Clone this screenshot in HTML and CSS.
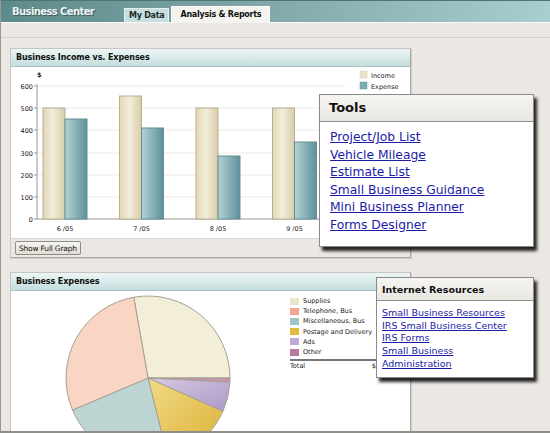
FILE: index.html
```html
<!DOCTYPE html>
<html lang="en">
<head>
  <meta charset="UTF-8">
  <title>Business Center</title>
  <link rel="stylesheet" href="styles.css">
</head>
<body>
  <div class="page">
    <div class="topbar">
      <div class="app-title">Business Center</div>
      <div class="tabs">
        <div class="tab">My Data</div>
        <div class="tab active">Analysis &amp; Reports</div>
      </div>
    </div>
    <div class="subbar"></div>

    <div class="main">
      <div class="panel income-panel">
        <div class="panel-title">Business Income vs. Expenses</div>
        <div class="chart">
          <svg width="398" height="171" viewBox="0 0 398 171">
            <defs>
              <linearGradient id="inc" x1="0" x2="1" y1="0" y2="0">
                <stop offset="0" stop-color="#e2d7b6"/>
                <stop offset="0.45" stop-color="#f3eedb"/>
                <stop offset="1" stop-color="#d9cda8"/>
              </linearGradient>
              <linearGradient id="exp" x1="0" x2="1" y1="0" y2="0">
                <stop offset="0" stop-color="#b3d2d5"/>
                <stop offset="0.5" stop-color="#88b2b8"/>
                <stop offset="1" stop-color="#5e8f98"/>
              </linearGradient>
            </defs>
            <g class="grid-lines">
              <line x1="26" y1="19" x2="334" y2="19"/>
              <line x1="26" y1="41" x2="334" y2="41"/>
              <line x1="26" y1="63" x2="334" y2="63"/>
              <line x1="26" y1="86" x2="334" y2="86"/>
              <line x1="26" y1="108" x2="334" y2="108"/>
              <line x1="26" y1="130" x2="334" y2="130"/>
            </g>
            <g class="axis">
              <line x1="26" y1="17" x2="26" y2="152"/>
              <line x1="26" y1="152" x2="336" y2="152"/>
              <line x1="23" y1="19" x2="26" y2="19"/>
              <line x1="23" y1="41" x2="26" y2="41"/>
              <line x1="23" y1="63" x2="26" y2="63"/>
              <line x1="23" y1="86" x2="26" y2="86"/>
              <line x1="23" y1="108" x2="26" y2="108"/>
              <line x1="23" y1="130" x2="26" y2="130"/>
              <line x1="23" y1="152" x2="26" y2="152"/>
            </g>
            <g class="ylabels">
              <text x="26" y="10" class="dollar">$</text>
              <text x="22" y="21.5">600</text>
              <text x="22" y="43.5">500</text>
              <text x="22" y="65.5">400</text>
              <text x="22" y="88.5">300</text>
              <text x="22" y="110.5">200</text>
              <text x="22" y="132.5">100</text>
              <text x="22" y="154.5">0</text>
            </g>
            <g class="bars">
              <rect class="b-inc" x="32" y="41" width="22" height="111"/>
              <rect class="b-exp" x="54" y="52" width="22" height="100"/>
              <rect class="b-inc" x="108.5" y="29" width="22" height="123"/>
              <rect class="b-exp" x="130.5" y="61" width="22" height="91"/>
              <rect class="b-inc" x="185" y="41" width="22" height="111"/>
              <rect class="b-exp" x="207" y="89" width="22" height="63"/>
              <rect class="b-inc" x="261.5" y="41" width="22" height="111"/>
              <rect class="b-exp" x="283.5" y="75" width="22" height="77"/>
            </g>
            <g class="xlabels">
              <text x="54" y="163.5">6 /05</text>
              <text x="130.5" y="163.5">7 /05</text>
              <text x="207" y="163.5">8 /05</text>
              <text x="283.5" y="163.5">9 /05</text>
            </g>
            <g class="legend">
              <rect x="349" y="4" width="7" height="7" fill="#ebe4c9" stroke="#d2c9a8" stroke-width="0.5"/>
              <text x="360" y="10.5">Income</text>
              <rect x="349" y="15" width="7" height="7" fill="#7fabb2" stroke="#6a969d" stroke-width="0.5"/>
              <text x="360" y="21.5">Expense</text>
            </g>
          </svg>
        </div>
        <div class="panel-foot">
          <button class="btn">Show Full Graph</button>
        </div>
      </div>

      <div class="panel expense-panel">
        <div class="panel-title">Business Expenses</div>
        <div class="pie-area">
          <svg class="pie" width="230" height="160" viewBox="0 0 230 160">
            <defs>
              <linearGradient id="gold" x1="0" x2="1" y1="0" y2="1">
                <stop offset="0" stop-color="#f1da86"/>
                <stop offset="1" stop-color="#dcb033"/>
              </linearGradient>
              <linearGradient id="lav" x1="0" x2="1" y1="0" y2="1">
                <stop offset="0" stop-color="#d5c9e2"/>
                <stop offset="1" stop-color="#ad98c8"/>
              </linearGradient>
            </defs>
            <g class="slices">
              <path d="M137,87 L122.76,6.25 A82,82 0 0 1 219,87 Z" fill="#f2eed8"/>
              <path d="M137,87 L219,87 A82,82 0 0 1 218.89,91.29 Z" fill="#c895ad"/>
              <path d="M137,87 L218.89,91.29 A82,82 0 0 1 211.91,120.35 Z" fill="url(#lav)"/>
              <path d="M137,87 L211.91,120.35 A82,82 0 0 1 156.84,166.56 Z" fill="url(#gold)"/>
              <path d="M137,87 L156.84,166.56 A82,82 0 0 1 61.52,119.04 Z" fill="#bcd4d2"/>
              <path d="M137,87 L61.52,119.04 A82,82 0 0 1 122.76,6.25 Z" fill="#f9d6c4"/>
            </g>
          </svg>
          <div class="pie-legend">
            <div class="leg-row"><span class="sw" style="background:#e9e5c9"></span>Supplies</div>
            <div class="leg-row"><span class="sw" style="background:#f2a58e"></span>Telephone, Bus</div>
            <div class="leg-row"><span class="sw" style="background:#9fc5c5"></span>Miscellaneous, Bus</div>
            <div class="leg-row"><span class="sw" style="background:#e2b83e"></span>Postage and Delivery</div>
            <div class="leg-row"><span class="sw" style="background:#c0a9d2"></span>Ads</div>
            <div class="leg-row"><span class="sw" style="background:#b87a9b"></span>Other</div>
            <div class="leg-total"><span>Total</span><span>$</span></div>
          </div>
        </div>
      </div>
    </div>

    <div class="popup tools">
      <div class="popup-head">Tools</div>
      <ul class="popup-links">
        <li><a href="#">Project/Job List</a></li>
        <li><a href="#">Vehicle Mileage</a></li>
        <li><a href="#">Estimate List</a></li>
        <li><a href="#">Small Business Guidance</a></li>
        <li><a href="#">Mini Business Planner</a></li>
        <li><a href="#">Forms Designer</a></li>
      </ul>
    </div>

    <div class="popup resources">
      <div class="popup-head">Internet Resources</div>
      <ul class="popup-links">
        <li><a href="#">Small Business Resources</a></li>
        <li><a href="#">IRS Small Business Center</a></li>
        <li><a href="#">IRS Forms</a></li>
        <li><a href="#">Small Business</a></li>
        <li><a href="#">Administration</a></li>
      </ul>
    </div>
  </div>
</body>
</html>
```

FILE: styles.css
```css
* {
  box-sizing: border-box;
}

body {
  margin: 0;
  font-family: 'DejaVu Sans', Verdana, sans-serif;
  background: #ebe8e3;
}

.page {
  position: relative;
  width: 550px;
  height: 433px;
  overflow: hidden;
  background: #ebe8e3;
  border-left: 1px solid #9a9893;
  border-bottom: 2px solid #8f8d89;
}

/* Header */
.topbar {
  height: 22px;
  display: flex;
  align-items: flex-end;
  background: linear-gradient(to right, #5d8a8b 0%, #7fa5a6 45%, #a8cfd0 100%);
  border-top: 1px solid #4f7475;
}

.app-title {
  width: 123px;
  padding-left: 11px;
  align-self: center;
  font-size: 10px;
  font-weight: bold;
  color: #eef3f3;
  text-shadow: 1px 1px 0 #3f5f60;
  letter-spacing: -0.6px;
}

.tabs {
  display: flex;
  align-items: flex-end;
  gap: 2px;
}

.tab {
  height: 14px;
  padding: 0 4px;
  font-size: 8px;
  font-weight: bold;
  line-height: 14px;
  color: #1e2b2b;
  background: #c5dfdf;
  border: 1px solid #e6f0f0;
  border-bottom: none;
  letter-spacing: -0.25px;
}

.tab.active {
  height: 17px;
  line-height: 16px;
  padding: 0 8px;
  background: #f4f3ef;
  color: #111;
  border-color: #fbfbf9;
  margin-bottom: -1px;
}

.subbar {
  height: 16px;
  border-top: 1px solid #fbfaf8;
  border-bottom: 1px solid #d4d1cb;
  background: #ebe8e3;
}

/* Panels */
.main {
  display: flex;
  flex-direction: column;
  gap: 14px;
  padding: 10px 0 0 9px;
}

.panel {
  width: 401px;
  background: #fff;
  border: 1px solid #c7c5c0;
  border-right-color: #a9a7a2;
  border-bottom-color: #a9a7a2;
  box-shadow: 1px 1px 0 #d0cec9;
}

.panel-title {
  height: 18px;
  padding-left: 5px;
  font-size: 8px;
  font-weight: bold;
  line-height: 18px;
  color: #111;
  background: linear-gradient(#eef6f6, #c3dddd);
  border-bottom: 1px solid #a6c4c4;
  letter-spacing: -0.1px;
}

.chart {
  height: 171px;
}

.chart svg {
  display: block;
}

.grid-lines line {
  stroke: #ecebe8;
  stroke-width: 1;
}

.axis line {
  stroke: #9a9890;
  stroke-width: 1;
}

.ylabels text {
  font-size: 6.5px;
  text-anchor: end;
  fill: #222;
}

.ylabels .dollar {
  text-anchor: start;
  font-weight: bold;
}

.xlabels text {
  font-size: 6.5px;
  text-anchor: middle;
  fill: #222;
}

.legend text {
  font-size: 6.5px;
  fill: #222;
}

.b-inc {
  fill: url(#inc);
  stroke: #b8ae92;
  stroke-width: 1;
}

.b-exp {
  fill: url(#exp);
  stroke: #628d94;
  stroke-width: 1;
}

.panel-foot {
  height: 19px;
  padding: 2px 0 0 4px;
  background: #ebe8e3;
  border-top: 1px solid #d9d6d0;
}

.btn {
  display: block;
  height: 14px;
  padding: 0 3px;
  font-family: 'DejaVu Sans', Verdana, sans-serif;
  font-size: 7.5px;
  color: #111;
  background: linear-gradient(#f6f5f1, #e1ded5);
  border: 1px solid #8e8c86;
  border-radius: 2px;
  letter-spacing: -0.2px;
}

.expense-panel {
  height: 200px;
}

.pie-area {
  display: flex;
  align-items: flex-start;
}

.pie {
  display: block;
  flex-shrink: 0;
}

.slices path {
  stroke: #a59f92;
  stroke-width: 1;
}

.pie-legend {
  margin: 5px 0 0 49px;
  width: 86px;
  font-size: 6.5px;
  color: #222;
}

.leg-row {
  display: flex;
  align-items: center;
  height: 10.2px;
  white-space: nowrap;
}

.sw {
  width: 9px;
  height: 7px;
  margin-right: 4px;
  flex-shrink: 0;
}

.leg-total {
  display: flex;
  justify-content: space-between;
  margin-top: 2px;
  padding-top: 1px;
  border-top: 2px solid #777;
}

/* Popups */
.popup {
  position: absolute;
  background: #fff;
  border: 1px solid #8a8a8a;
  box-shadow: 3px 4px 3px rgba(0, 0, 0, 0.85);
}

.popup-head {
  font-weight: bold;
  color: #111;
  background: linear-gradient(#f6f5f2, #e9e7e2);
  border-bottom: 1px solid #8f8f8f;
}

.popup-links {
  list-style: none;
  margin: 0;
  padding: 0;
}

.popup-links a {
  color: #1c1ca8;
  text-decoration: underline;
}

.tools {
  left: 318px;
  top: 94px;
  width: 215px;
  height: 153px;
}

.tools .popup-head {
  height: 27px;
  padding-left: 9px;
  font-size: 13px;
  line-height: 26px;
}

.tools .popup-links {
  padding: 7px 0 0 10px;
  font-size: 12.3px;
  line-height: 17.6px;
}

.resources {
  left: 375px;
  top: 277px;
  width: 158px;
  height: 101px;
}

.resources .popup-head {
  height: 23px;
  padding-left: 5px;
  font-size: 9.5px;
  line-height: 23px;
}

.resources .popup-links {
  padding: 6px 0 0 5px;
  font-size: 9.5px;
  line-height: 12.7px;
}
```
